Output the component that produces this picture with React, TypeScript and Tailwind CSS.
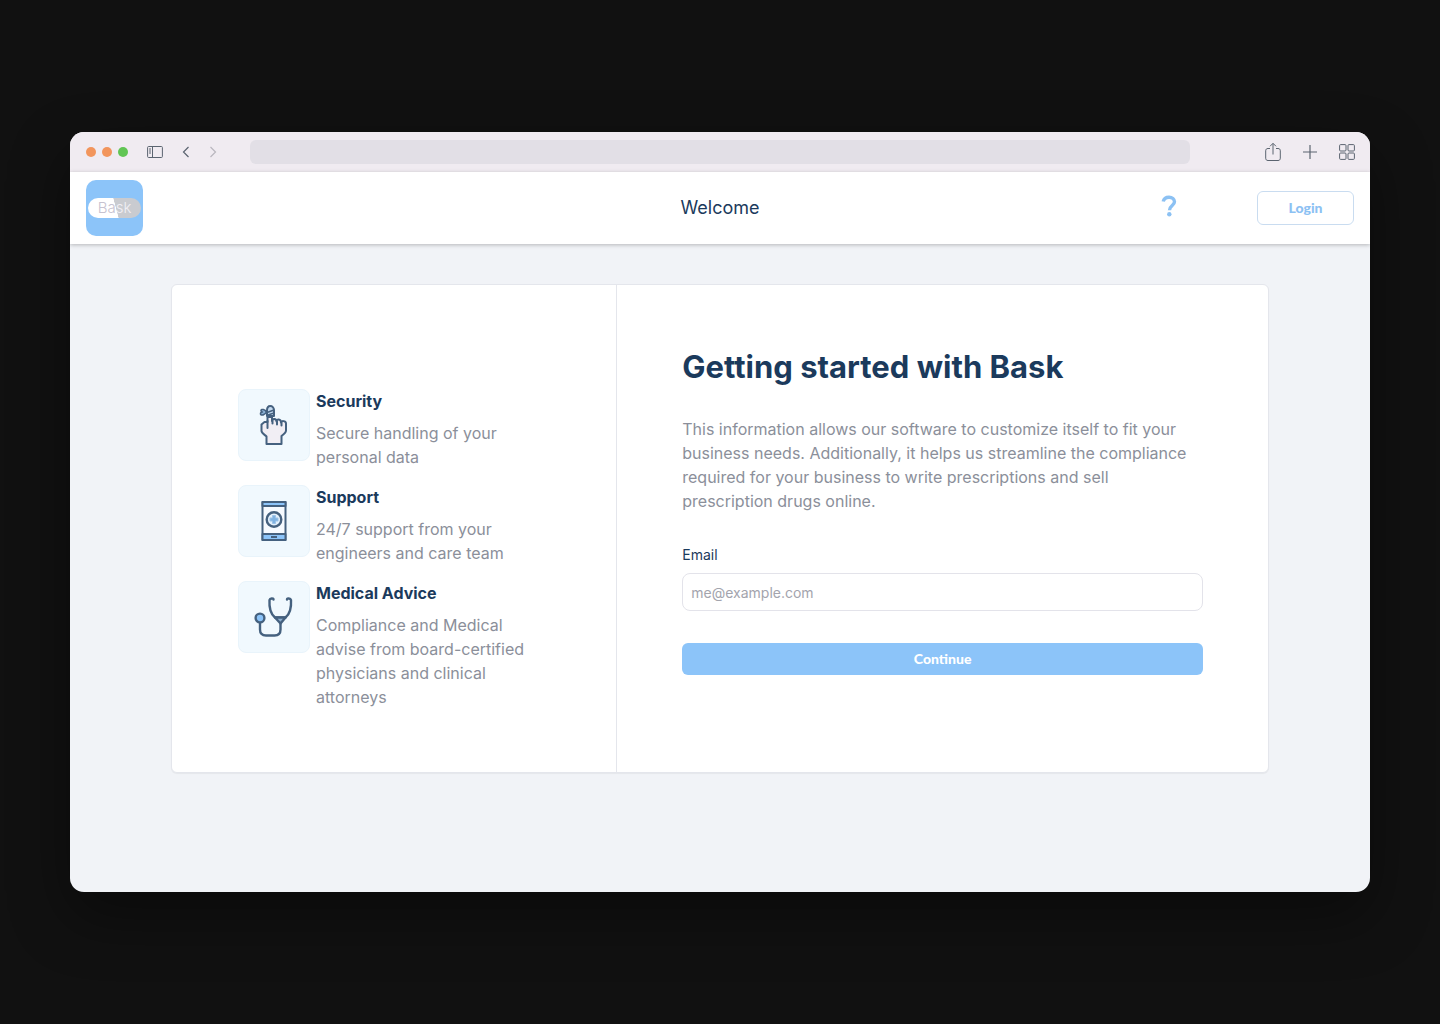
import React from 'react';

const features = [
  {
    title: 'Security',
    text: 'Secure handling of your personal data',
    icon: <FingerIcon />,
  },
  {
    title: 'Support',
    text: '24/7 support from your engineers and care team',
    icon: <PhoneIcon />,
  },
  {
    title: 'Medical Advice',
    text: 'Compliance and Medical advise from board-certified physicians and clinical attorneys',
    icon: <StethoscopeIcon />,
  },
];

function FingerIcon() {
  return (
    <svg width="30" height="42" viewBox="0 0 30 42" fill="none" stroke="#45617f" strokeWidth="2" strokeLinejoin="round" strokeLinecap="round">
      <path d="M8.500 13v5H5.500L2.500 20.500V27c0 2 3.500 4 5 5.500V40h15v-8c2-1.500 4.500-3.500 4.500-5.500v-7c0-3-5-3-5-1 0-3.500-4.500-4-4.500-1 0-3-4.500-3.500-4.500-.500v-4z" fill="#f1eef4" />
      <path d="M8.500 17v7M13.500 16v3.500M18 17.500v3M22.500 18.500v3" />
      <path d="M8 12V6.500C8 3.500 9.500 2 11.300 2S15 3.500 15 6.500V12z" fill="#c4daf0" />
      <path d="M7.500 8C6 5.500 2.500 4.500 2 6.500c0 1 .500 1.500 1.500 1.500-1.500 0-2 .500-2 2 .500 2 4.500 1 6-2z" fill="#8fb4d8" strokeWidth="1.600" />
      <path d="M8 8.500l7-2.500M9 11l6-2" strokeWidth="1.500" />
    </svg>
  );
}

function PhoneIcon() {
  return (
    <svg width="26" height="42" viewBox="0 0 26 42" fill="none" stroke="#45617f" strokeWidth="2" strokeLinejoin="round">
      <path d="M1.500 2h23v38h-23z" fill="#f6faff" />
      <path d="M1.500 2h23v4h-23zM1.500 34h23v6h-23z" fill="#8cc4f9" />
      <path d="M10 37h6" />
      <circle cx="13" cy="19.500" r="7.300" fill="#e3f0fc" strokeWidth="2.400" />
      <path d="M11.500 15.500h3v2.500H17v3h-2.500v2.500h-3V21H9v-3h2.500z" fill="#7fb2e2" stroke="#9cc3e8" strokeWidth="1" />
    </svg>
  );
}

function StethoscopeIcon() {
  return (
    <svg width="40" height="42" viewBox="0 0 40 42" fill="none" stroke="#45617f" strokeWidth="2.400" strokeLinecap="round" strokeLinejoin="round">
      <path d="M19.500 3.500c0-1.500-3.500-1.500-4 .500-.500 8 1.200 14 5.500 17.500h10.500c4.300-3.500 6-9.500 5.500-17.500-.500-2-4-2-4-.500" />
      <path d="M21 21.500h10.500L26.500 27.500z" fill="#8fb0d0" />
      <path d="M26.500 28v5.500c0 4-2 6-6 6H12c-4 0-6-2-6-6v-7" />
      <circle cx="6" cy="22" r="4.400" fill="#8cc4f9" />
    </svg>
  );
}

const BrowserBar: React.FC = () => (
  <div className="flex h-10 items-center bg-[#f0ebf1] pr-[15px] pl-4 text-[#5b6470]">
    <div className="flex items-center gap-[6px]">
      <span className="size-[10px] rounded-full bg-[#f2955c]"></span>
      <span className="size-[10px] rounded-full bg-[#f2955c]"></span>
      <span className="size-[10px] rounded-full bg-[#61c554]"></span>
    </div>
    <button aria-label="Sidebar" className="ml-[19px]">
      <svg width="16" height="12" viewBox="0 0 16 12" fill="none" stroke="currentColor">
        <rect x=".600" y=".500" width="14.800" height="11" rx="1" />
        <path d="M5.500 .500v11M2 3h2M2 5h2M2 7h2" />
      </svg>
    </button>
    <button aria-label="Back" className="ml-[19px]">
      <svg width="8" height="12" viewBox="0 0 8 12" fill="none" stroke="currentColor" strokeWidth="1.200">
        <path d="M6.500 1L1.500 6l5 5" />
      </svg>
    </button>
    <button aria-label="Forward" className="ml-[19px] text-[#b9b6be]">
      <svg width="8" height="12" viewBox="0 0 8 12" fill="none" stroke="currentColor" strokeWidth="1.200">
        <path d="M1.500 1l5 5-5 5" />
      </svg>
    </button>
    <input aria-label="Address" className="mr-[75px] ml-[33px] h-6 min-w-0 flex-1 rounded-md bg-[#e2dfe6] px-3 text-xs outline-none" />
    <div className="flex items-center gap-[21px]">
      <button aria-label="Share">
        <svg width="16" height="20" viewBox="0 0 16 20" fill="none" stroke="currentColor">
          <path d="M5 6.500H3C1.500 6.500.700 7.300.700 8.800v7.400c0 1.500.800 2.300 2.300 2.300h10c1.500 0 2.300-.800 2.300-2.300V8.800c0-1.500-.800-2.300-2.300-2.300h-2M8 12.500V1.500M5 4.300l3-3 3 3" />
        </svg>
      </button>
      <button aria-label="New tab">
        <svg width="16" height="16" viewBox="0 0 16 16" fill="none" stroke="currentColor" strokeWidth="1.200">
          <path d="M8 1v14M1 8h14" />
        </svg>
      </button>
      <button aria-label="Tabs">
        <svg width="16" height="16" viewBox="0 0 16 16" fill="none" stroke="currentColor">
          <rect x=".600" y=".600" width="6.400" height="6.400" rx="1" />
          <rect x="9" y=".600" width="6.400" height="6.400" rx="1" />
          <rect x=".600" y="9" width="6.400" height="6.400" rx="1" />
          <rect x="9" y="9" width="6.400" height="6.400" rx="1" />
        </svg>
      </button>
    </div>
  </div>
);

const Header: React.FC = () => (
  <header className="relative z-10 grid h-[72px] grid-cols-3 items-center bg-white px-4 shadow-[0_1px_4px_rgba(0,0,0,0.25)]">
    <a href="#" aria-label="Bask" className="flex h-14 w-[57px] items-center justify-center rounded-[10px] bg-[#8cc4f9]">
      <span className="flex h-5 w-[53px] items-center justify-center rounded-full bg-[linear-gradient(75deg,#ffffff_52%,#c9cbd0_53%)] text-[15px] leading-5 font-light text-[#c6c2d0]">
        Ba<span className="text-[#f1eff5]">sk</span>
      </span>
    </a>
    <h1 className="text-center text-lg text-[#1b3a5c]">Welcome</h1>
    <div className="flex items-center justify-end gap-20">
      <button aria-label="Help">
        <svg width="16" height="28" viewBox="0 0 16 28" fill="none" stroke="#8cc1f3" strokeWidth="3.400">
          <path d="M2.200 7.500C2.800 4.800 5 3.200 8 3.200c3.200 0 5.500 1.800 5.500 4.600 0 3.700-5 3.700-5 8.400" />
          <circle cx="8.300" cy="20.300" r="2.200" fill="#8cc1f3" stroke="none" />
        </svg>
      </button>
      <button className="h-[34px] w-[97px] rounded-md border border-[#c9dcf0] font-[Lato,sans-serif] text-sm font-black text-[#8cc1f3]">
        Login
      </button>
    </div>
  </header>
);

const App: React.FC = () => {
  return (
    <div className="flex min-h-screen items-center justify-center bg-[#111111] px-[70px] py-8 font-[Inter,sans-serif]">
      <div className="w-full overflow-hidden rounded-[14px] bg-[#f1f3f7] shadow-[0_24px_60px_rgba(0,0,0,0.4)]">
        <BrowserBar />
        <Header />

        <main className="px-[101px] pt-10 pb-[119px]">
          <div className="grid grid-cols-[13fr_19fr] rounded-md border border-[#e4e6ec] bg-white shadow-[0_1px_1px_rgba(0,0,0,0.05)]">
            {/* Features */}
            <div className="space-y-4 border-r border-[#e4e6ec] pt-[104px] pr-16 pb-[63px] pl-[66px]">
              {features.map((f) => (
                <div key={f.title} className="flex gap-[6px]">
                  <div className="flex size-[72px] shrink-0 items-center justify-center rounded-lg border border-[#e9f4fb] bg-[#f1f9fe]">
                    {f.icon}
                  </div>
                  <div className="max-w-[216px]">
                    <h3 className="text-base font-bold text-[#1b3a5c]">{f.title}</h3>
                    <p className="mt-2 text-base text-[#8b8f9a]">{f.text}</p>
                  </div>
                </div>
              ))}
            </div>

            {/* Sign up */}
            <div className="px-[65px] pt-[62px] pb-24">
              <h2 className="text-[31px] leading-10 font-bold text-[#1b3a5c]">Getting started with Bask</h2>
              <p className="mt-[30px] max-w-[516px] text-base text-[#8b8f9a]">
                This information allows our software to customize itself to fit your business needs. Additionally, it helps us
                streamline the compliance required for your business to write prescriptions and sell prescription drugs online.
              </p>
              <label htmlFor="email" className="mt-8 block text-sm text-[#1b3a5c]">
                Email
              </label>
              <input
                id="email"
                type="email"
                placeholder="me@example.com"
                className="mt-2 block h-[38px] w-full rounded-lg border border-[#e3e3ea] px-2 text-sm outline-none placeholder:text-[#a3a4ad]"
              />
              <button className="mt-8 h-8 w-full rounded-md bg-[#8cc4f9] font-[Lato,sans-serif] text-sm font-black text-white">
                Continue
              </button>
            </div>
          </div>
        </main>
      </div>
    </div>
  );
};

export default App;
